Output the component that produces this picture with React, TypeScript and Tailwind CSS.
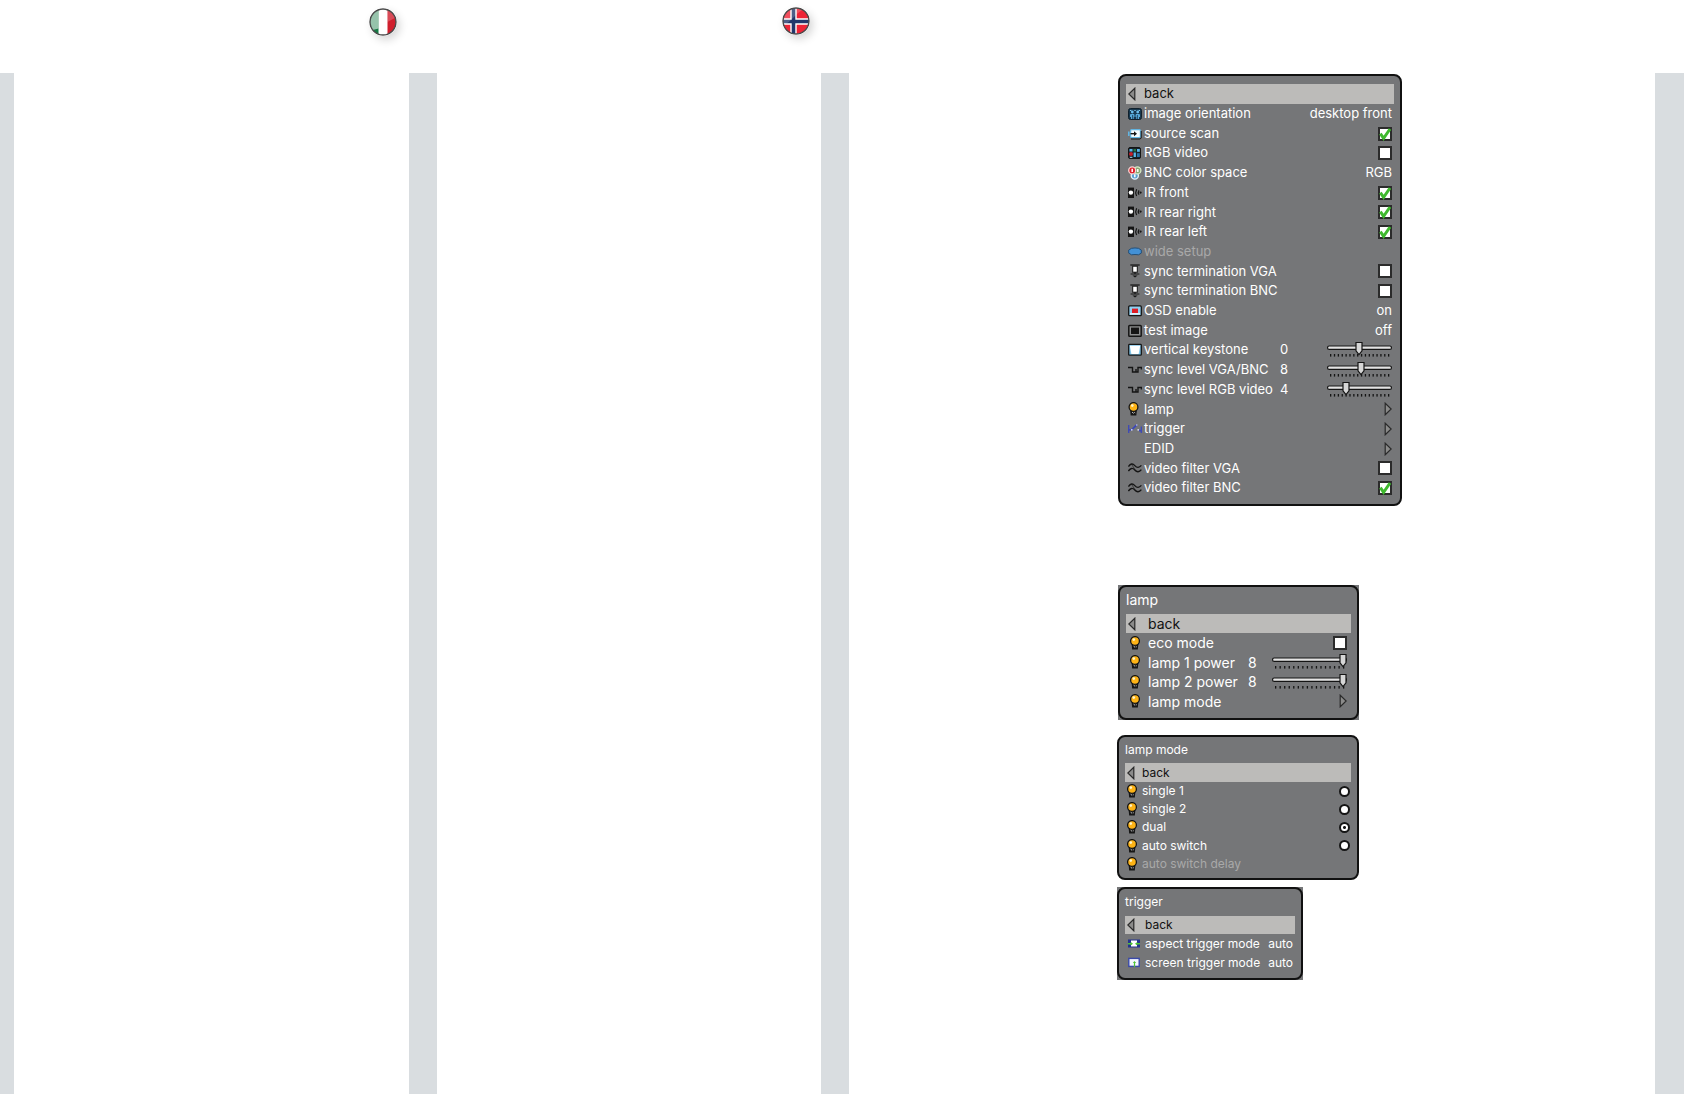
import { useId, useState, type ReactNode } from "react";

const DARK = "#151515";

/* ---------- icons (14 x 14 grid) ---------- */

function Icon({ children }: { children?: ReactNode }) {
  return (
    <svg viewBox="0 0 14 14" className="h-[14px] w-[14px] shrink-0" fill="none" aria-hidden="true">
      {children}
    </svg>
  );
}

const OrientationIcon = () => (
  <Icon>
    <rect x="0.5" y="1.5" width="13" height="11" rx="2" fill="#17384f" stroke="#10202c" />
    <path d="M2 3.5h1.4M6.3 3.5h1.4M10.6 3.5H12" stroke="#7cc9f0" />
    <circle cx="4.3" cy="5" r="1.4" fill="#6cc0ee" />
    <circle cx="9.7" cy="5" r="1.4" fill="#6cc0ee" />
    <path d="M2.5 10V7.500h3.500V10M3.500 8v4M5.200 8v4M8 10V7.500h3.500V10M8.800 8v4M10.500 8v4" stroke="#5cb4e6" strokeWidth="0.9" />
  </Icon>
);

const SourceIcon = () => (
  <Icon>
    <rect x="2.6" y="2.6" width="9.8" height="8" rx="1" fill="#f4fbfe" stroke="#62b5e2" strokeWidth="1.2" />
    <path d="M3 12h9.2l1-1V4" stroke={DARK} />
    <path d="M0.8 4.5v4.6" stroke="#62b5e2" strokeWidth="1.6" />
    <path d="M2.5 6.7h4" stroke={DARK} strokeWidth="1.4" />
    <path d="M6 4.2 9 6.7 6 9.2z" fill={DARK} />
  </Icon>
);

const RgbVideoIcon = () => (
  <Icon>
    <rect x="0.5" y="1.5" width="12" height="11" rx="1.5" fill="#17222b" stroke={DARK} />
    <path d="M1.5 3h3v2.5h-3z" fill="#58b7ea" />
    <path d="M5.5 3h2.5v2.5H5.5z" fill="#287a45" />
    <path d="M9 3h2.8v2.8H9z" fill="#58b7ea" />
    <circle cx="3" cy="8" r="2" fill="#c5202b" />
    <path d="M5.6 6.5h2.3V11H5.6z" fill="#58b7ea" />
    <path d="M9 7.2h2.8V11H9z" fill="#2a74ad" />
    <path d="M1.8 11.3h2.6" stroke="#aadcf5" />
  </Icon>
);

const ColorSpaceIcon = () => (
  <Icon>
    <circle cx="6.8" cy="9.6" r="3.6" fill="#5b9fd0" stroke="#e6f3fb" strokeWidth="1.3" />
    <circle cx="9.4" cy="4.4" r="3.5" fill="#86a873" stroke="#d9ecc9" strokeWidth="1.3" />
    <circle cx="4.2" cy="4.4" r="3.5" fill="#e0222c" stroke="#f6d4d2" strokeWidth="1.3" />
    <path d="M4.2 2.8V6M9.8 3v3M6.8 8.2v3" stroke="#fff" strokeWidth="1.5" />
  </Icon>
);

const InfraredIcon = () => (
  <Icon>
    <rect x="0" y="1.6" width="6" height="10.4" fill={DARK} />
    <circle cx="2.9" cy="6.6" r="2.2" fill="#fff" />
    <path d="M8.6 3.2Q6.9 6.6 8.6 10M11 4.4Q9.6 6.6 11 8.8" stroke={DARK} strokeWidth="1.2" />
    <circle cx="12.6" cy="6.6" r="1.1" fill={DARK} />
  </Icon>
);

const WideIcon = () => (
  <Icon>
    <path d="M3.5 3.3Q7 2.6 10.5 3.3L13.3 5.1V8.1L10.5 9.8Q7 9.2 3.5 9.8L0.7 8.1V5.1Z" fill="#4391d6" stroke="#234f78" />
  </Icon>
);

const TerminationIcon = () => (
  <Icon>
    <path d="M2.3 1h9.4" stroke={DARK} strokeWidth="1.2" />
    <rect x="4.7" y="2.2" width="4.6" height="6" fill="#fff" stroke={DARK} />
    <path d="M7 8v2.5M2.6 10h8.8" stroke={DARK} strokeWidth="1.2" />
    <path d="M4.4 11.6h5.2L7 13.6z" fill={DARK} />
  </Icon>
);

const OsdIcon = () => (
  <Icon>
    <rect x="0.7" y="1.9" width="12.6" height="9.8" rx="1" fill="#8fd0f2" stroke={DARK} strokeWidth="1.3" />
    <path d="M2 9.8h10" stroke="#e8f6fd" strokeWidth="1.4" />
    <rect x="4" y="4.6" width="6" height="4.4" fill="#dd1d25" />
  </Icon>
);

const TestImageIcon = () => (
  <Icon>
    <rect x="0.8" y="1.4" width="12.4" height="10.8" rx="0.8" fill="#8b8c8d" stroke={DARK} strokeWidth="1.5" />
    <rect x="3" y="3.6" width="8" height="6.4" fill={DARK} />
  </Icon>
);

const KeystoneIcon = () => (
  <Icon>
    <rect x="0.7" y="1.4" width="12.6" height="10.8" rx="0.8" fill="#7fc6ec" stroke={DARK} strokeWidth="1.3" />
    <path d="M1.8 2.8h10.4L10.6 11H3.4z" fill="#fff" />
  </Icon>
);

const SyncLevelIcon = () => (
  <Icon>
    <path d="M0 4.500h4.500v4.500h3.500V6M7.500 9H10V4.500h4" stroke={DARK} strokeWidth="1.4" />
    <path d="M13.300 4.500v2" stroke={DARK} strokeWidth="1.2" />
  </Icon>
);

const LampIcon = ({ cx = 5 }: { cx?: number }) => (
  <Icon>
    <g transform={`translate(${cx - 7} 0)`}>
      <path d="M3.6 8h6.8l-.6 5.400H4.200z" fill={DARK} />
      <circle cx="7" cy="5" r="4.4" fill="#fdb316" stroke={DARK} strokeWidth="1.3" />
      <circle cx="5.8" cy="3.6" r="1.3" fill="#fff6cf" />
      <path d="M5.6 10.2l1.6 1.2M7.8 10.4l.9.5" stroke="#c9c9c9" strokeWidth="1" />
    </g>
  </Icon>
);

const TriggerIcon = () => (
  <Icon>
    <path d="M0.7 3v8M13.3 4.5V11" stroke="#3d49b8" strokeWidth="1.3" />
    <path d="M1 7.8h2.2M11 8.6h2M3.6 7.8 9 2.6" stroke="#3d49b8" strokeWidth="1.8" />
    <circle cx="3.8" cy="7.8" r="0.9" fill="#d9def5" />
    <circle cx="8.8" cy="3" r="0.7" fill="#d9def5" />
    <circle cx="10.2" cy="7.8" r="0.9" fill="#d9def5" />
  </Icon>
);

const FilterIcon = () => (
  <Icon>
    <path d="M0.4 5.6Q3.6 1 6.8 4.6T13.4 4.4M0.4 10Q3.6 5.4 6.8 9T13.4 8.6" stroke={DARK} strokeWidth="1.4" />
    <path d="M3.6 3.4 7 8.6" stroke={DARK} strokeWidth="0.6" />
  </Icon>
);

const AspectTriggerIcon = () => (
  <Icon>
    <rect x="1" y="2.5" width="12" height="8" fill="#24338f" />
    <rect x="4" y="3.5" width="6" height="6" fill="#fff" />
    <path d="M1 6.8h3.4M9.6 6.8H13" stroke="#4fc436" strokeWidth="1.5" />
    <path d="M6 6.8 3.8 5v3.6zM8 6.8l2.2-1.8v3.6z" fill="#4fc436" />
  </Icon>
);

const ScreenTriggerIcon = () => (
  <Icon>
    <rect x="1.8" y="2.4" width="10.4" height="8" fill="#f4f7ff" stroke="#3a49a8" strokeWidth="1.4" />
    <path d="M7.5 6v5" stroke="#4fc436" strokeWidth="1.2" />
    <path d="M5.9 7 7.5 4.9 9.1 7z" fill="#4fc436" />
  </Icon>
);

const BackArrow = () => (
  <svg viewBox="0 0 8 14" className="h-[14px] w-2 shrink-0" aria-hidden="true">
    <path d="M6.8 1.2v11.6L0.8 7z" fill="#8b8b8a" stroke="#2a2a2a" strokeWidth="1.2" />
  </svg>
);

const ForwardArrow = () => (
  <svg viewBox="0 0 8 14" className="h-[14px] w-2 shrink-0" aria-hidden="true">
    <path d="M1.2 1.2v11.6L7.2 7z" fill="#8b8b8a" stroke="#2a2a2a" strokeWidth="1.2" />
  </svg>
);

/* ---------- flags ---------- */

function FlagShell({ id, children }: { id: string; children: ReactNode }) {
  return (
    <svg viewBox="0 0 28 28" className="h-7 w-7 rounded-full shadow-[3px_4px_8px_rgba(0,0,0,0.16)]">
      <defs>
        <clipPath id={id}>
          <circle cx="14" cy="14" r="13" />
        </clipPath>
      </defs>
      <g clipPath={`url(#${id})`}>{children}</g>
      <circle cx="14" cy="14" r="13" fill="none" stroke="#4a4a4a" strokeWidth="1.4" />
    </svg>
  );
}

const ItalianFlag = () => (
  <FlagShell id="flag-it">
    <rect width="28" height="28" fill="#fff" />
    <rect width="9.5" height="28" fill="#177a45" />
    <rect x="18.5" width="9.5" height="28" fill="#d01f2d" />
    <path d="M0 0h9.5v20.500L0 23z" fill="#fff" opacity="0.55" />
    <path d="M18.5 0H28v9q-4 1.500-9.500 5z" fill="#fff" opacity="0.2" />
  </FlagShell>
);

const NorwegianFlag = () => (
  <FlagShell id="flag-no">
    <rect width="28" height="28" fill="#ee2436" />
    <path d="M11.500 0v28M0 14.500h28" stroke="#fff" strokeWidth="6.4" />
    <path d="M11.500 0v28M0 14.500h28" stroke="#22376b" strokeWidth="3.6" />
    <path d="M0 0h26Q17 4 12 10T0 19z" fill="#fff" opacity="0.2" />
  </FlagShell>
);

/* ---------- controls ---------- */

function CheckBox({ id, initial }: { id: string; initial: boolean }) {
  return (
    <span className="relative flex">
      <input
        id={id}
        type="checkbox"
        defaultChecked={initial}
        className="peer h-[14px] w-[14px] appearance-none border-2 border-[#2b2b2b] bg-white"
      />
      <svg viewBox="0 0 14 14" className="pointer-events-none absolute inset-0 hidden h-[14px] w-[14px] peer-checked:block">
        <path d="M2.4 6.6 5.6 11.3 12 2" fill="none" stroke="#3fb92e" strokeWidth="3" />
      </svg>
    </span>
  );
}

function Slider({ id, width, at, value }: { id: string; width: number; at: number; value: number }) {
  const [shift, setShift] = useState(0);
  const x = Math.max(4, Math.min(width - 4, at + shift * 3));
  const gap = (width - 7) / 15;
  return (
    <span className="relative flex">
      <svg width={width} height="18" viewBox={`0 0 ${width} 18`} aria-hidden="true">
        <rect x="0.6" y="5" width={width - 1.2} height="3.4" rx="1.5" fill="#e4e4e4" stroke={DARK} strokeWidth="1.2" />
        {Array.from({ length: 16 }, (_, i) => (
          <rect key={i} x={3 + i * gap} y="13" width="1.3" height="2.6" fill={DARK} />
        ))}
        <path d={`M${x - 3} 1.5h6v8.3L${x} 13.6 ${x - 3} 9.8z`} fill="#d6d6d6" stroke={DARK} strokeWidth="1.2" />
      </svg>
      <input
        id={id}
        type="range"
        min={value - 16}
        max={value + 16}
        value={value + shift}
        onChange={(e) => setShift(Number(e.target.value) - value)}
        className="absolute inset-0 h-full w-full opacity-0"
      />
    </span>
  );
}

/* ---------- menu ---------- */

type Item = {
  label: string;
  icon?: ReactNode;
  kind: "value" | "check" | "radio" | "slider" | "menu" | "disabled";
  value?: string;
  on?: boolean;
  at?: number;
};

type MenuProps = {
  title?: string;
  items: Item[];
  frame: string;
  bar: string;
  list: string;
  iconBox: string;
  labelBox?: string;
  sliderWidth?: number;
};

function Menu({ title, items, frame, bar, list, iconBox, labelBox = "", sliderWidth = 65 }: MenuProps) {
  const base = useId();
  return (
    <section className={`rounded-lg border-2 border-[#111] bg-[#757678] font-[Inter,'Liberation_Sans',sans-serif] text-white ${frame}`}>
      {title && <h2 className="leading-4">{title}</h2>}
      <button type="button" className={`flex w-full items-center bg-[#bcbbb9] px-[2px] text-[#111] ${bar}`}>
        <span className={`flex shrink-0 ${iconBox}`}>
          <BackArrow />
        </span>
        back
      </button>
      <ul className={`grid auto-rows-fr ${list}`}>
        {items.map((item, i) => {
          const id = `${base}-${i}`;
          const row = "flex h-full w-full items-center pl-[2px] text-left whitespace-nowrap";
          const icon = <span className={`flex shrink-0 ${iconBox}`}>{item.icon}</span>;
          if (item.kind === "check" || item.kind === "radio" || item.kind === "slider") {
            return (
              <li key={id} className={row}>
                {icon}
                <label htmlFor={id} className={item.kind === "slider" ? labelBox : ""}>
                  {item.label}
                </label>
                {item.kind === "slider" && <output htmlFor={id}>{item.value}</output>}
                <span className="ml-auto flex">
                  {item.kind === "check" && <CheckBox id={id} initial={!!item.on} />}
                  {item.kind === "radio" && (
                    <input
                      id={id}
                      type="radio"
                      name={base}
                      defaultChecked={item.on}
                      className="h-[11px] w-[11px] appearance-none rounded-full border-2 border-[#151515] bg-white checked:bg-[radial-gradient(circle,#151515_1px,white_2px)]"
                    />
                  )}
                  {item.kind === "slider" && (
                    <Slider id={id} width={sliderWidth} at={item.at ?? 0} value={Number(item.value)} />
                  )}
                </span>
              </li>
            );
          }
          return (
            <li key={id}>
              <button type="button" disabled={item.kind === "disabled"} className={`${row} disabled:text-[#a9a9a9]`}>
                {icon}
                <span>{item.label}</span>
                <span className="ml-auto flex">{item.kind === "menu" ? <ForwardArrow /> : item.value}</span>
              </button>
            </li>
          );
        })}
      </ul>
    </section>
  );
}

const setupItems: Item[] = [
  { label: "image orientation", icon: <OrientationIcon />, kind: "value", value: "desktop front" },
  { label: "source scan", icon: <SourceIcon />, kind: "check", on: true },
  { label: "RGB video", icon: <RgbVideoIcon />, kind: "check" },
  { label: "BNC color space", icon: <ColorSpaceIcon />, kind: "value", value: "RGB" },
  { label: "IR front", icon: <InfraredIcon />, kind: "check", on: true },
  { label: "IR rear right", icon: <InfraredIcon />, kind: "check", on: true },
  { label: "IR rear left", icon: <InfraredIcon />, kind: "check", on: true },
  { label: "wide setup", icon: <WideIcon />, kind: "disabled" },
  { label: "sync termination VGA", icon: <TerminationIcon />, kind: "check" },
  { label: "sync termination BNC", icon: <TerminationIcon />, kind: "check" },
  { label: "OSD enable", icon: <OsdIcon />, kind: "value", value: "on" },
  { label: "test image", icon: <TestImageIcon />, kind: "value", value: "off" },
  { label: "vertical keystone", icon: <KeystoneIcon />, kind: "slider", value: "0", at: 32 },
  { label: "sync level VGA/BNC", icon: <SyncLevelIcon />, kind: "slider", value: "8", at: 34 },
  { label: "sync level RGB video", icon: <SyncLevelIcon />, kind: "slider", value: "4", at: 19 },
  { label: "lamp", icon: <LampIcon cx={5.5} />, kind: "menu" },
  { label: "trigger", icon: <TriggerIcon />, kind: "menu" },
  { label: "EDID", kind: "menu" },
  { label: "video filter VGA", icon: <FilterIcon />, kind: "check" },
  { label: "video filter BNC", icon: <FilterIcon />, kind: "check", on: true },
];

const lampItems: Item[] = [
  { label: "eco mode", icon: <LampIcon cx={7} />, kind: "check" },
  { label: "lamp 1 power", icon: <LampIcon cx={7} />, kind: "slider", value: "8", at: 71 },
  { label: "lamp 2 power", icon: <LampIcon cx={7} />, kind: "slider", value: "8", at: 71 },
  { label: "lamp mode", icon: <LampIcon cx={7} />, kind: "menu" },
];

const lampModeItems: Item[] = [
  { label: "single 1", icon: <LampIcon />, kind: "radio" },
  { label: "single 2", icon: <LampIcon />, kind: "radio" },
  { label: "dual", icon: <LampIcon />, kind: "radio", on: true },
  { label: "auto switch", icon: <LampIcon />, kind: "radio" },
  { label: "auto switch delay", icon: <LampIcon />, kind: "disabled" },
];

const triggerItems: Item[] = [
  { label: "aspect trigger mode", icon: <AspectTriggerIcon />, kind: "value", value: "auto" },
  { label: "screen trigger mode", icon: <ScreenTriggerIcon />, kind: "value", value: "auto" },
];

export default function App() {
  return (
    <div className="grid min-h-screen grid-cols-[14px_395fr_28px_384fr_28px_806fr_29px] grid-rows-[73px_1fr] bg-white">
      <div />
      <div className="flex justify-end pt-2 pr-3">
        <ItalianFlag />
      </div>
      <div />
      <div className="flex justify-end pt-[7px] pr-[11px]">
        <NorwegianFlag />
      </div>
      <div className="col-span-3" />

      <div className="bg-[#d9dde0]" />
      <div />
      <div className="bg-[#d9dde0]" />
      <div />
      <div className="bg-[#d9dde0]" />
      <main className="flex flex-col items-start pt-px pl-[268px]">
        <div className="mb-[79px] pl-px">
          <Menu
            items={setupItems}
            frame="w-[284px] px-[6px] pt-2 pb-[6px] text-[13px]"
            bar="h-5"
            list="h-[394px] pr-[2px]"
            iconBox="w-4"
            labelBox="w-[136px]"
          />
        </div>
        <div className="mb-[15px] pl-px">
          <div className="bg-[#757678]">
            <Menu
              title="lamp"
              items={lampItems}
              frame="w-[241px] px-[6px] pt-[5px] pb-[7px] text-[14px]"
              bar="mt-[6px] h-[19px]"
              list="h-[78px] pr-1"
              iconBox="w-5"
              labelBox="w-[100px]"
              sliderWidth={75}
            />
          </div>
        </div>
        <Menu
          title="lamp mode"
          items={lampModeItems}
          frame="mb-[7px] w-[242px] px-[6px] pt-[5px] pb-[5px] text-[12px]"
          bar="mt-[5px] h-[19px]"
          list="h-[91px] pr-px"
          iconBox="w-[15px]"
        />
        <div className="bg-[#757678]">
          <Menu
            title="trigger"
            items={triggerItems}
            frame="w-[186px] px-[6px] pt-[5px] pb-[6px] text-[12px]"
            bar="mt-[6px] h-[18px]"
            list="h-[38px] pr-[2px]"
            iconBox="w-[18px]"
          />
        </div>
      </main>
      <div className="bg-[#d9dde0]" />
    </div>
  );
}
